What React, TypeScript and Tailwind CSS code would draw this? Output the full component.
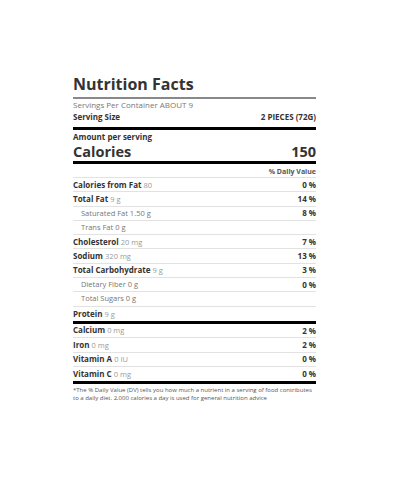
type Row = { label: string; amount?: string; dv?: string; sub?: boolean }

const topRows: Row[] = [
  { label: 'Calories from Fat', amount: '80', dv: '0 %' },
  { label: 'Total Fat', amount: '9 g', dv: '14 %' },
  { label: 'Saturated Fat 1.50 g', dv: '8 %', sub: true },
  { label: 'Trans Fat 0 g', sub: true },
  { label: 'Cholesterol', amount: '20 mg', dv: '7 %' },
  { label: 'Sodium', amount: '320 mg', dv: '13 %' },
  { label: 'Total Carbohydrate', amount: '9 g', dv: '3 %' },
  { label: 'Dietary Fiber 0 g', dv: '0 %', sub: true },
  { label: 'Total Sugars 0 g', sub: true },
  { label: 'Protein', amount: '9 g' },
]

const vitaminRows: Row[] = [
  { label: 'Calcium', amount: '0 mg', dv: '2 %' },
  { label: 'Iron', amount: '0 mg', dv: '2 %' },
  { label: 'Vitamin A', amount: '0 IU', dv: '0 %' },
  { label: 'Vitamin C', amount: '0 mg', dv: '0 %' },
]

function FactRow({ row, last }: { row: Row; last?: boolean }) {
  return (
    <div
      className={`flex h-[14.3px] items-center justify-between ${last ? '' : 'border-b border-[#e2e2e2]'}`}
    >
      {row.sub ? (
        <span className="pl-[8px] text-[7.5px] text-[#777]">{row.label}</span>
      ) : (
        <span className="text-[8px] font-bold text-[#333]">
          {row.label} <span className="text-[7.5px] font-normal text-[#999]">{row.amount}</span>
        </span>
      )}
      {row.dv && <span className="text-[8px] font-bold text-[#333]">{row.dv}</span>}
    </div>
  )
}

export default function App() {
  return (
    <div className="h-[480px] w-[400px] bg-white font-['Open_Sans',sans-serif]">
      <div className="ml-[73px] w-[243px] pt-[73px]">
        {/* Header */}
        <h1 className="text-[16px] font-bold leading-[22px] text-[#333]">Nutrition Facts</h1>
        <div className="mt-[2px] h-[2px] bg-[#888]" />
        <div className="text-[8px] leading-[12px] text-[#777]">Servings Per Container ABOUT 9</div>
        <div className="flex justify-between text-[8px] font-bold leading-[12px] text-[#333]">
          <span>Serving Size</span>
          <span>2 PIECES (72G)</span>
        </div>
        <div className="mt-[4px] h-[3px] bg-black" />

        {/* Calories */}
        <div className="pt-[1px] text-[8px] font-bold leading-[11px] text-[#333]">Amount per serving</div>
        <div className="mt-[1px] flex justify-between text-[14.5px] font-bold leading-[18px] text-[#333]">
          <span>Calories</span>
          <span>150</span>
        </div>
        <div className="h-[3px] bg-black" />

        {/* Nutrients */}
        <div className="border-b border-[#e2e2e2] pt-[2px] text-right text-[7px] font-bold leading-[11px] text-[#555]">
          % Daily Value
        </div>
        {topRows.map((row, i) => (
          <FactRow key={row.label} row={row} last={i === topRows.length - 1} />
        ))}
        <div className="h-[3px] bg-black" />
        {vitaminRows.map((row, i) => (
          <FactRow key={row.label} row={row} last={i === vitaminRows.length - 1} />
        ))}
        <div className="h-[3px] bg-black" />

        {/* Footnote */}
        <p className="mt-[2px] text-[6px] leading-[8.3px] text-[#555]">
          *The % Daily Value (DV) tells you how much a nutrient in a serving of food contributes to a daily diet. 2,000
          calories a day is used for general nutrition advice
        </p>
      </div>
    </div>
  )
}
